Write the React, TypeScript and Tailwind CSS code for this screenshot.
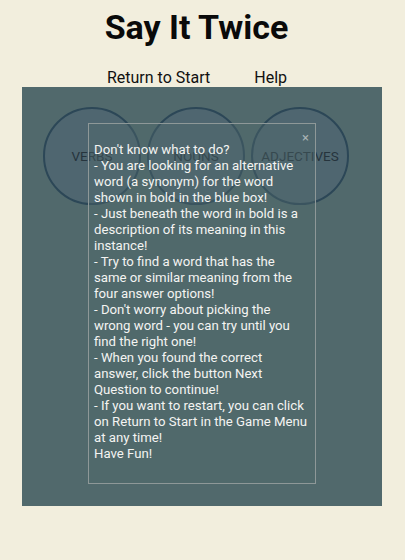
import React from "react";

const lines = [
  "Don't know what to do?",
  "- You are looking for an alternative",
  "word (a synonym) for the word",
  "shown in bold in the blue box!",
  "- Just beneath the word in bold is a",
  "description of its meaning in this",
  "instance!",
  "- Try to find a word that has the",
  "same or similar meaning from the",
  "four answer options!",
  "- Don't worry about picking the",
  "wrong word - you can try until you",
  "find the right one!",
  "- When you found the correct",
  "answer, click the button Next",
  "Question to continue!",
  "- If you want to restart, you can click",
  "on Return to Start in the Game Menu",
  "at any time!",
  "Have Fun!",
];

export default function App() {
  return (
    <div
      className="w-[405px] h-[560px] bg-[#f2eedd] flex flex-col items-center"
      style={{ fontFamily: "Roboto, 'Liberation Sans', sans-serif" }}
    >
      <h1 className="mt-[7px] mr-[12px] text-[34px] leading-[40px] font-bold text-[#0a0a0a]">
        Say It Twice
      </h1>
      <nav className="mt-[21px] mr-[11px] flex gap-[44px] text-[16px] leading-[19px] text-[#111]">
        <span>Return to Start</span>
        <span>Help</span>
      </nav>
      <div className="relative self-start ml-[22px] w-[360px] h-[419px] bg-[#51696c]">
        <div className="flex gap-[6px] pl-[21px] pt-[20px]">
          {["VERBS", "NOUNS", "ADJECTIVES"].map((w) => (
            <div
              key={w}
              className="w-[98px] h-[98px] rounded-full border-2 border-[#2c4757] bg-[#4f6670] flex items-center justify-center text-[13.5px] text-[#26343d]"
            >
              {w}
            </div>
          ))}
        </div>
        <div className="absolute left-[66px] top-[36px] w-[228px] h-[361px] border border-[#8e9898] bg-[#51696c]/40 pl-[5px] pt-[18px]">
          <span className="absolute right-[6px] top-[7px] text-[13px] leading-[14px] text-[#a9b3b4]">×</span>
          <div className="text-[13.2px] leading-[16px] text-[#f4f4f2]">
            {lines.map((l, i) => (
              <div key={i} className="whitespace-nowrap">
                {l}
              </div>
            ))}
          </div>
        </div>
      </div>
    </div>
  );
}
